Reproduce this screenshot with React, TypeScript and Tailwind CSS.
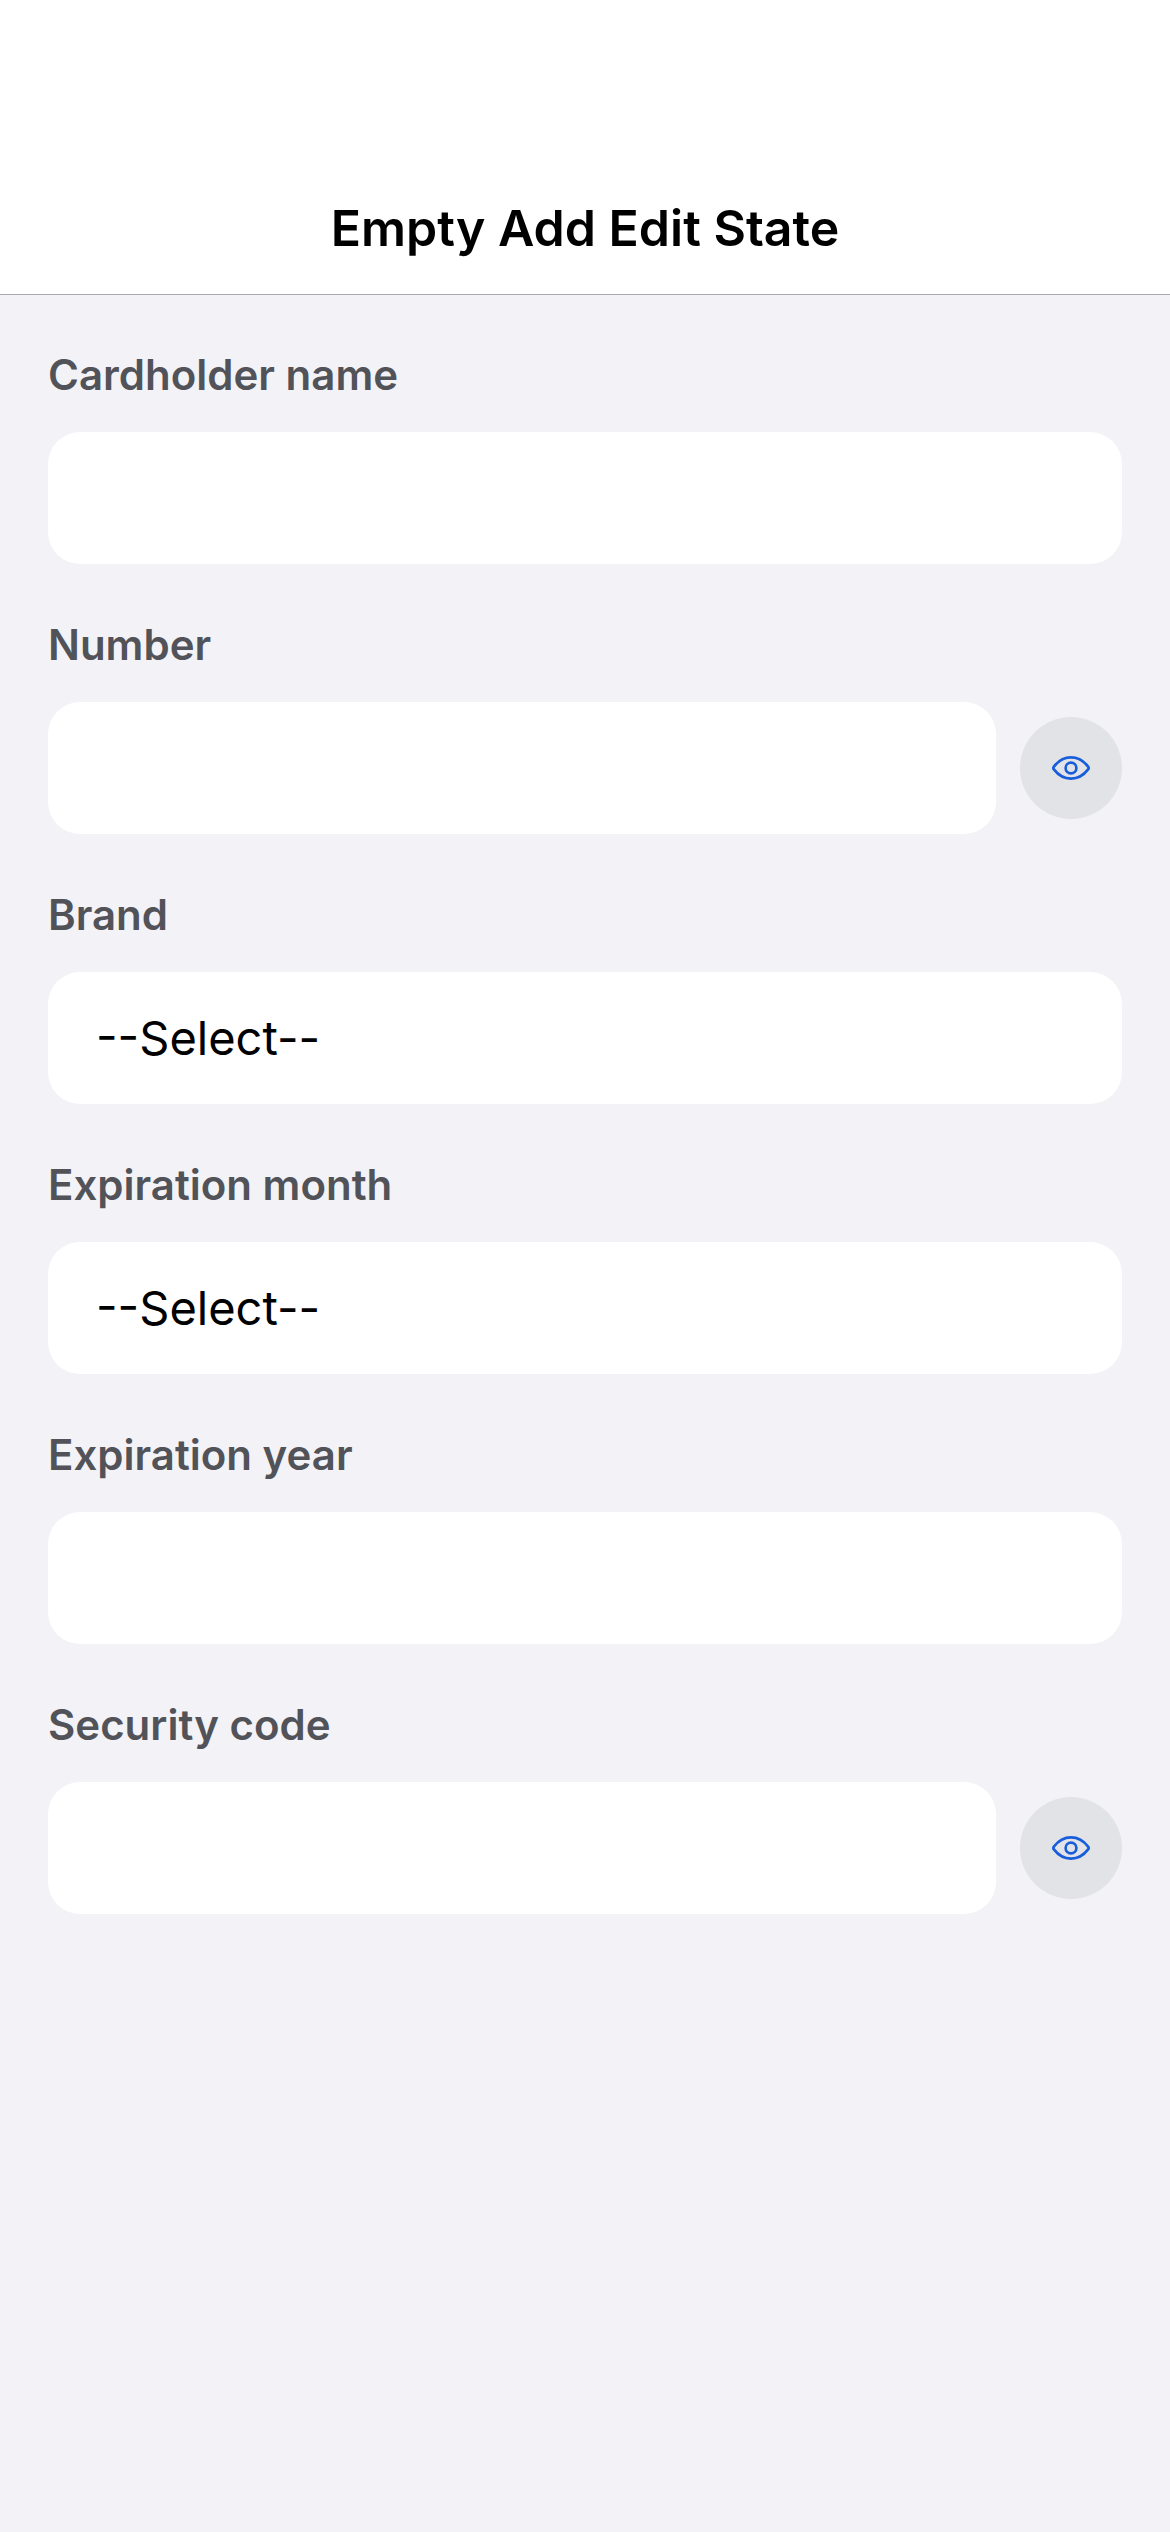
import { useState } from "react";

const fieldClass =
  "block h-[132px] w-full min-w-0 flex-1 appearance-none rounded-[32px] border-0 bg-white px-12 text-[47px] text-black outline-none";

const labelClass = "text-[42px] leading-[48px] font-semibold text-[#525259]";

function EyeIcon() {
  return (
    <svg
      viewBox="0 0 38 24"
      className="h-6 w-[38px]"
      fill="none"
      stroke="#175ddc"
      strokeWidth="2.7"
      strokeLinejoin="round"
      aria-hidden="true"
    >
      <path d="M1.9 10.6C5.8 5.5 11.6 1.4 19 1.4s13.2 4.1 17.1 9.2c.7.9.7 1.9 0 2.8C32.2 18.5 26.4 22.6 19 22.6S5.8 18.5 1.9 13.4c-.7-.9-.7-1.9 0-2.8Z" />
      <circle cx="19" cy="12" r="5.4" />
    </svg>
  );
}

function TextField({ id, label }: { id: string; label: string }) {
  return (
    <div className="flex flex-col gap-[33px]">
      <label htmlFor={id} className={labelClass}>
        {label}
      </label>
      <div className="flex">
        <input id={id} type="text" className={fieldClass} />
      </div>
    </div>
  );
}

function SecretField({ id, label }: { id: string; label: string }) {
  const [visible, setVisible] = useState(false);
  return (
    <div className="flex flex-col gap-[33px]">
      <label htmlFor={id} className={labelClass}>
        {label}
      </label>
      <div className="flex items-center gap-6">
        <input id={id} type={visible ? "text" : "password"} className={fieldClass} />
        <button
          type="button"
          aria-label={`Toggle ${label.toLowerCase()} visibility`}
          aria-pressed={visible}
          onClick={() => setVisible(!visible)}
          className="flex size-[102px] shrink-0 items-center justify-center rounded-full bg-[#e2e3e7]"
        >
          <EyeIcon />
        </button>
      </div>
    </div>
  );
}

function SelectField({ id, label, options }: { id: string; label: string; options: string[] }) {
  return (
    <div className="flex flex-col gap-[33px]">
      <label htmlFor={id} className={labelClass}>
        {label}
      </label>
      <div className="flex">
        <select id={id} defaultValue="" className={fieldClass}>
          <option value="">--Select--</option>
          {options.map((option) => (
            <option key={option}>{option}</option>
          ))}
        </select>
      </div>
    </div>
  );
}

const brands = ["Visa", "Mastercard", "American Express", "Discover"];
const months = ["01", "02", "03", "04", "05", "06", "07", "08", "09", "10", "11", "12"];

export default function App() {
  return (
    <div className="min-h-screen bg-[#f2f2f7] font-['Inter',sans-serif]">
      <header className="border-b border-[#a9a9ac] bg-white pt-[198px] pb-9">
        <h1 className="text-center text-[50px] leading-[60px] font-semibold text-black">
          Empty Add Edit State
        </h1>
      </header>
      <form className="flex flex-col gap-[57px] px-12 py-14">
        <TextField id="cardholder" label="Cardholder name" />
        <SecretField id="number" label="Number" />
        <SelectField id="brand" label="Brand" options={brands} />
        <SelectField id="month" label="Expiration month" options={months} />
        <TextField id="year" label="Expiration year" />
        <SecretField id="code" label="Security code" />
      </form>
    </div>
  );
}
